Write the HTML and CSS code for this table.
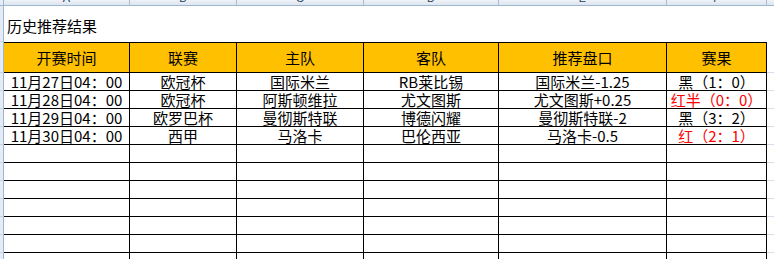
FILE: index.html
```html
<!DOCTYPE html>
<html lang="zh-CN">
<head>
<meta charset="utf-8">
<title>历史推荐结果</title>
<link rel="stylesheet" href="styles.css">
</head>
<body>
<div class="sheet">
  <div class="ch corner"></div>
  <div class="ch"><span>A</span></div>
  <div class="ch"><span>B</span></div>
  <div class="ch"><span>C</span></div>
  <div class="ch"><span>D</span></div>
  <div class="ch"><span>E</span></div>
  <div class="ch"><span>F</span></div>
  <div class="ch last"></div>

  <div class="gut"></div>
  <div class="title">历史推荐结果</div>
  <div class="ext blank"></div>

  <div class="gut"></div>
  <div class="hd">开赛时间</div>
  <div class="hd">联赛</div>
  <div class="hd">主队</div>
  <div class="hd">客队</div>
  <div class="hd">推荐盘口</div>
  <div class="hd">赛果</div>
  <div class="ext"></div>

  <div class="gut"></div>
  <div class="c">11月27日04：00</div>
  <div class="c">欧冠杯</div>
  <div class="c">国际米兰</div>
  <div class="c">RB莱比锡</div>
  <div class="c">国际米兰-1.25</div>
  <div class="c">黑（1：0）</div>
  <div class="ext"></div>

  <div class="gut"></div>
  <div class="c">11月28日04：00</div>
  <div class="c">欧冠杯</div>
  <div class="c">阿斯顿维拉</div>
  <div class="c">尤文图斯</div>
  <div class="c">尤文图斯+0.25</div>
  <div class="c red">红半（0：0）</div>
  <div class="ext"></div>

  <div class="gut"></div>
  <div class="c">11月29日04：00</div>
  <div class="c">欧罗巴杯</div>
  <div class="c">曼彻斯特联</div>
  <div class="c">博德闪耀</div>
  <div class="c">曼彻斯特联-2</div>
  <div class="c">黑（3：2）</div>
  <div class="ext"></div>

  <div class="gut"></div>
  <div class="c">11月30日04：00</div>
  <div class="c">西甲</div>
  <div class="c">马洛卡</div>
  <div class="c">巴伦西亚</div>
  <div class="c">马洛卡-0.5</div>
  <div class="c red">红（2：1）</div>
  <div class="ext"></div>

  <div class="gut"></div><div class="c"></div><div class="c"></div><div class="c"></div><div class="c"></div><div class="c"></div><div class="c"></div><div class="ext"></div>
  <div class="gut"></div><div class="c"></div><div class="c"></div><div class="c"></div><div class="c"></div><div class="c"></div><div class="c"></div><div class="ext"></div>
  <div class="gut"></div><div class="c"></div><div class="c"></div><div class="c"></div><div class="c"></div><div class="c"></div><div class="c"></div><div class="ext"></div>
  <div class="gut"></div><div class="c"></div><div class="c"></div><div class="c"></div><div class="c"></div><div class="c"></div><div class="c"></div><div class="ext"></div>
  <div class="gut"></div><div class="c"></div><div class="c"></div><div class="c"></div><div class="c"></div><div class="c"></div><div class="c"></div><div class="ext"></div>
  <div class="gut"></div><div class="c"></div><div class="c"></div><div class="c"></div><div class="c"></div><div class="c"></div><div class="c"></div><div class="ext"></div>
  <div class="gut"></div><div class="c"></div><div class="c"></div><div class="c"></div><div class="c"></div><div class="c"></div><div class="c"></div><div class="ext"></div>
</div>
</body>
</html>
```
FILE: styles.css
```css
html, body {
  margin: 0;
  padding: 0;
  background: #ffffff;
  overflow: hidden;
  height: 259px;
}

.sheet {
  display: grid;
  grid-template-columns: 4px 126px 107px 127px 135px 168px 100px 7px;
  grid-template-rows: 6px 36px 31px repeat(11, 18px);
  font-family: "Noto Sans CJK SC", sans-serif;
  font-size: 15px;
  color: #000;
}

.sheet > div {
  box-sizing: border-box;
  min-width: 0;
}

/* column header strip */
.ch {
  background: linear-gradient(#eef2f8, #dde5ef);
  border-right: 1px solid #a9bcd4;
  border-bottom: 1px solid #9eb6ce;
  overflow: hidden;
  display: flex;
  justify-content: center;
}
.ch span {
  font-family: "Liberation Sans", sans-serif;
  font-size: 11px;
  line-height: 11px;
  color: #2a3f5a;
  margin-top: -7px;
}
.ch.corner {
  background: #e6ecf4;
  border-right: 1px solid #9eb6ce;
}
.ch.last {
  border-right: none;
}

/* row gutter */
.gut {
  background: #e4ebf5;
  border-right: 1px solid #9eb6ce;
  border-bottom: 1px solid #c4d2e4;
}

.title {
  grid-column: 2 / span 6;
  display: flex;
  align-items: center;
  padding: 3px 0 0 3px;
  line-height: 17px;
  white-space: nowrap;
}

.ext {
  border-bottom: 1px solid #d5deea;
}
.ext.blank {
  border-bottom: none;
}

.hd {
  background: #ffc000;
  border-top: 1px solid #000;
  border-right: 1px solid #000;
  border-bottom: 1px solid #000;
  display: flex;
  align-items: center;
  justify-content: center;
  line-height: 17px;
  white-space: nowrap;
}

.c {
  border-right: 1px solid #000;
  border-bottom: 1px solid #000;
  display: flex;
  align-items: center;
  justify-content: center;
  line-height: 17px;
  white-space: nowrap;
  overflow: hidden;
}

.red {
  color: #ff0000;
}
```
